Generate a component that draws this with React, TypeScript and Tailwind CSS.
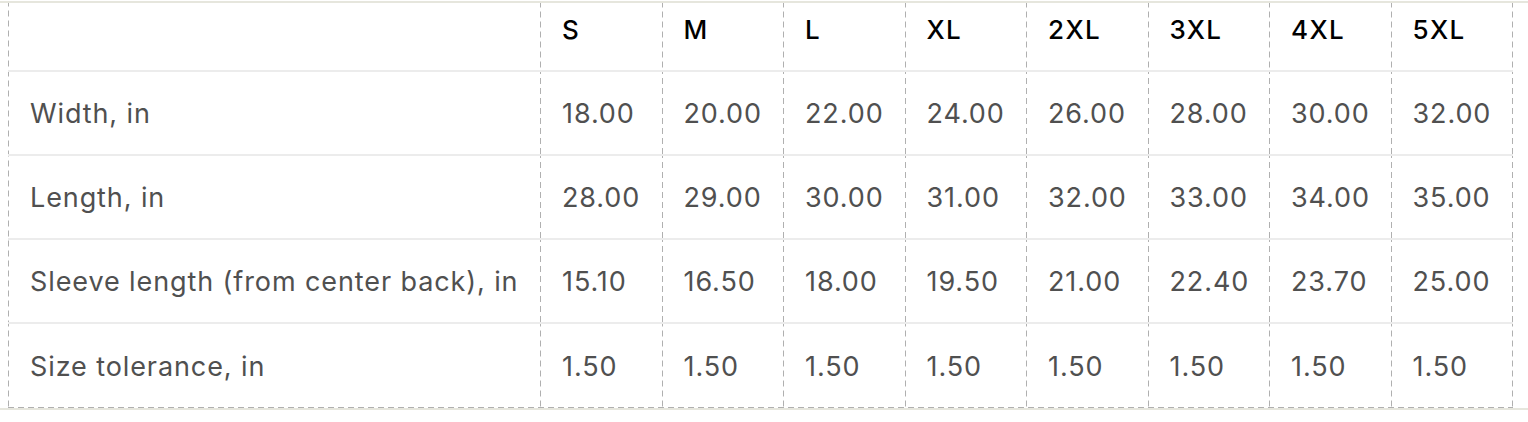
import React from "react";

const sizes = ["S", "M", "L", "XL", "2XL", "3XL", "4XL", "5XL"];
const rows: [string, string[]][] = [
  ["Width, in", ["18.00", "20.00", "22.00", "24.00", "26.00", "28.00", "30.00", "32.00"]],
  ["Length, in", ["28.00", "29.00", "30.00", "31.00", "32.00", "33.00", "34.00", "35.00"]],
  ["Sleeve length (from center back), in", ["15.10", "16.50", "18.00", "19.50", "21.00", "22.40", "23.70", "25.00"]],
  ["Size tolerance, in", ["1.50", "1.50", "1.50", "1.50", "1.50", "1.50", "1.50", "1.50"]],
];

const vdash =
  "bg-[linear-gradient(#b0b0b0_60%,transparent_60%)] bg-[length:1px_10px] bg-repeat-y bg-right";

export default function App() {
  return (
    <div className="w-[1528px] h-[422px] bg-white" style={{ fontFamily: "Inter, 'Liberation Sans', sans-serif" }}>
      <div className="mt-px border-t-2 border-b-2 border-[#e6e6dd]">
        <div className="ml-2 w-[1505px] bg-[linear-gradient(#b0b0b0_60%,transparent_60%)] bg-[length:1px_10px] bg-repeat-y bg-left">
          <div className="grid grid-cols-[533px_repeat(8,121.5px)] h-[69px] border-b-2 border-[#ececec]">
            <div className={vdash} />
            {sizes.map((s) => (
              <div
                key={s}
                className={`pl-[21px] pt-[11px] text-[26px] leading-[32px] font-medium tracking-[1.4px] text-black ${vdash}`}
              >
                {s}
              </div>
            ))}
          </div>
          {rows.map(([label, vals], r) => (
            <div
              key={label}
              className={`grid grid-cols-[533px_repeat(8,121.5px)] ${r < 3 ? "h-[84px] border-b-2 border-[#ececec]" : "h-[83px]"}`}
            >
              <div className={`pl-[22px] pt-[3px] flex items-center text-[27px] tracking-[0.9px] text-[#505050] ${vdash}`}>
                {label}
              </div>
              {vals.map((v, i) => (
                <div
                  key={i}
                  className={`pl-[21px] pt-[3px] flex items-center text-[27px] tracking-[0.9px] text-[#505050] ${vdash}`}
                >
                  {v}
                </div>
              ))}
            </div>
          ))}
          <div className="h-px bg-[linear-gradient(to_right,#b0b0b0_60%,transparent_60%)] bg-[length:10px_1px] bg-repeat-x" />
        </div>
      </div>
    </div>
  );
}
